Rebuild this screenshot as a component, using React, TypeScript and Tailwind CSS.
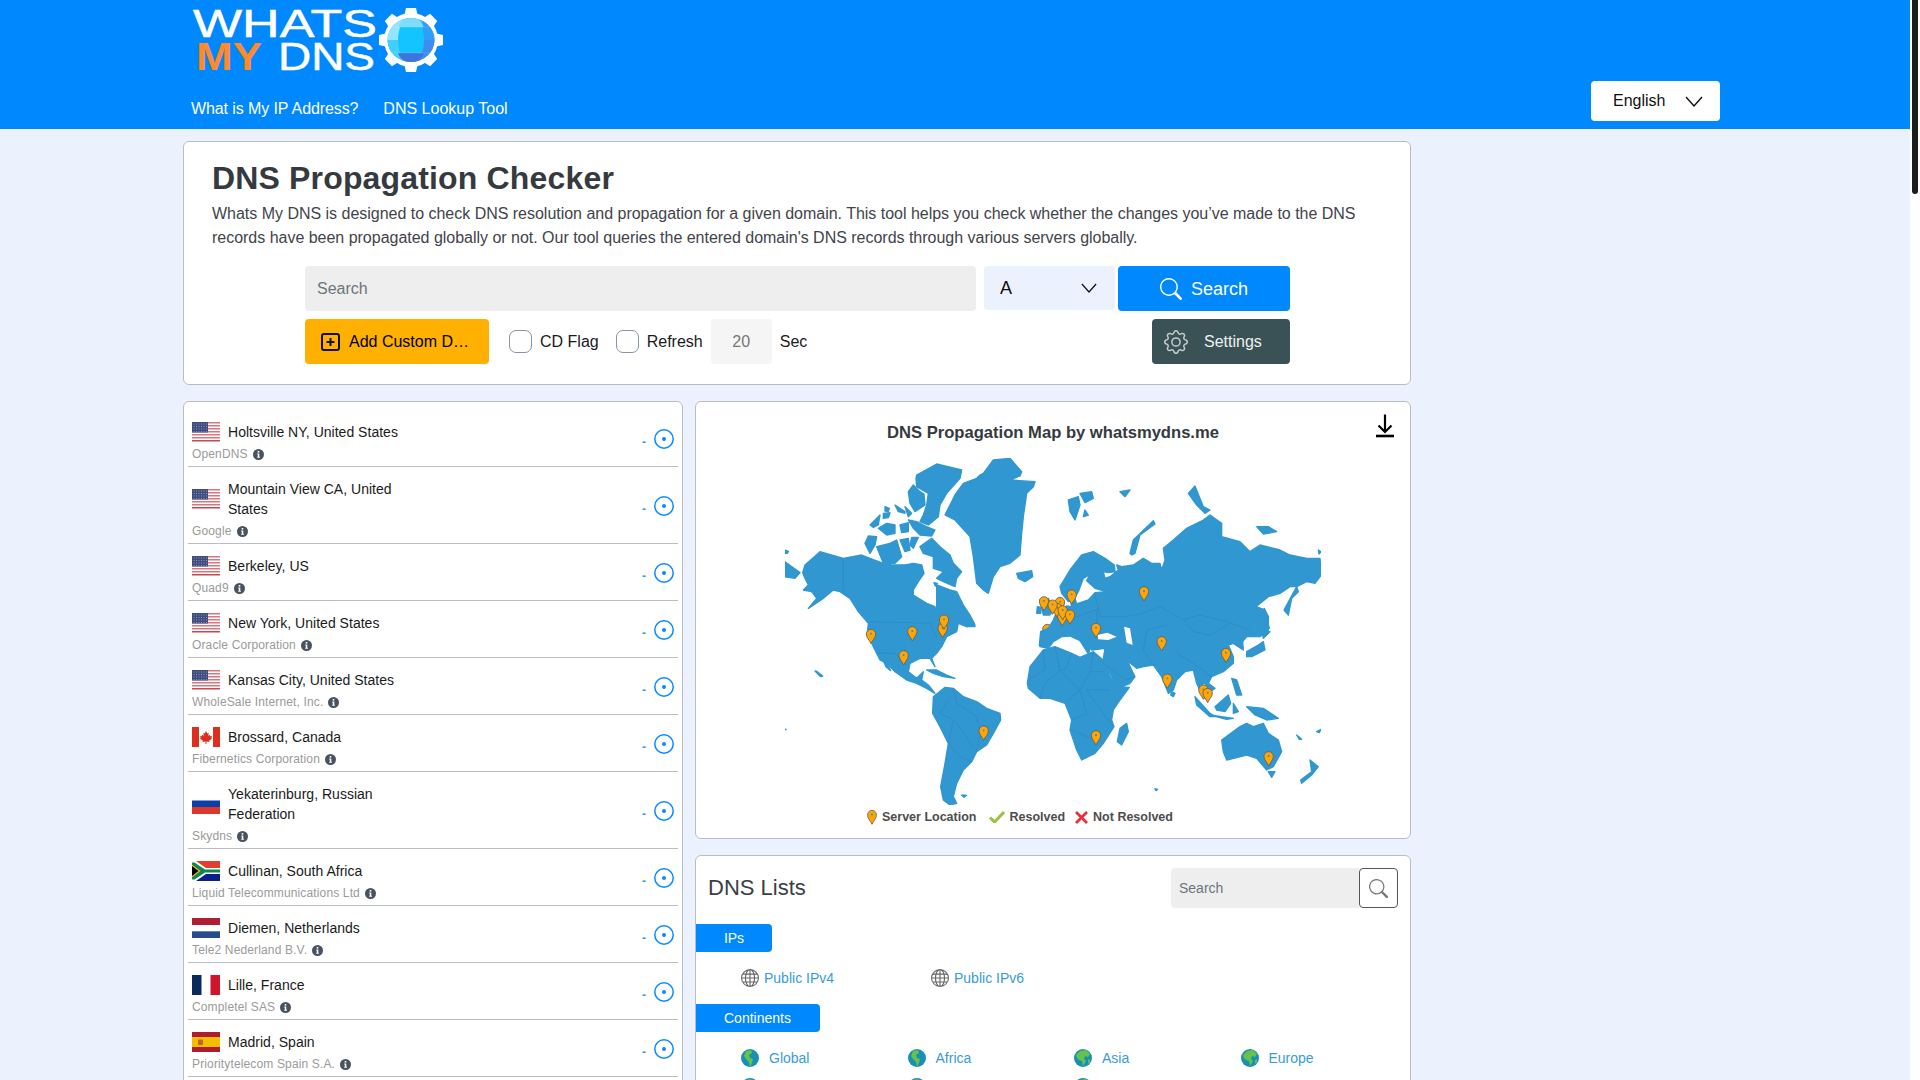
import React from "react";
import { BsGear, BsSearch, BsGlobe } from "react-icons/bs";

const font = "font-['Liberation_Sans',Arial,sans-serif]";

function Chevron({ cls }: { cls: string }) {
  return (
    <svg viewBox="0 0 18 11" className={cls} fill="none" stroke="currentColor" strokeWidth="1.4">
      <path d="M1 1 L9 10 L17 1" />
    </svg>
  );
}

function Logo() {
  return (
    <svg width="262" height="76" viewBox="191 2 262 76" className="block">
      <defs>
        <clipPath id="gl"><ellipse cx="411" cy="40" rx="23.5" ry="22" /></clipPath>
      </defs>
      <text x="193" y="37" fontFamily="Liberation Sans" fontSize="38" fill="#fff" stroke="#fff" strokeWidth="0.5" textLength="184" lengthAdjust="spacingAndGlyphs">WHATS</text>
      <text x="196" y="70" fontFamily="Liberation Sans" fontSize="38" fontWeight="700" fill="#ff8a2d" textLength="66" lengthAdjust="spacingAndGlyphs">MY</text>
      <text x="278" y="70" fontFamily="Liberation Sans" fontSize="38" fill="#fff" stroke="#fff" strokeWidth="0.5" textLength="97" lengthAdjust="spacingAndGlyphs">DNS</text>
      <g fill="#fff">
        <circle cx="411" cy="40" r="27" />
        {[0, 45, 90, 135, 180, 225, 270, 315].map((a) => (
          <path key={a} d="M404 17L406 8H416L418 17Z" transform={`rotate(${a} 411 40)`} />
        ))}
      </g>
      <g clipPath="url(#gl)">
        <rect x="385" y="15" width="52" height="50" fill="#2fa8fb" />
        <rect x="385" y="15" width="26" height="25" fill="#93e6ff" />
        <rect x="385" y="40" width="26" height="25" fill="#3fd0ff" />
        <rect x="411" y="40" width="26" height="25" fill="#3f8cf0" />
        <path d="M423 15h14v25h-14z" fill="#2f9dfa" />
        <ellipse cx="411" cy="40" rx="13" ry="23" fill="#14c4ff" />
        <path d="M411 17c-7 0-11 4-12.500 10h25c-1.500-6-5.500-10-12.500-10z" fill="#7fdcff" />
        <path d="M398 53c2 6 7 10 13 10s11-4 13-10z" fill="#3f74dd" />
        <path d="M387 27h48M387 53h48" stroke="#fff" strokeOpacity="0.25" strokeWidth="0.6" />
      </g>
    </svg>
  );
}

function Flag({ c }: { c: string }) {
  const cls = "w-[28px] h-[20px] shrink-0 block";
  if (c === "us")
    return (
      <svg viewBox="0 0 28 20" className={cls}>
        <rect width="28" height="20" fill="#fff" />
        {[0, 3, 6, 9, 12, 15, 18].map((y) => (
          <rect key={y} y={y} width="28" height="1.5" fill={y === 18 ? "#c8464f" : "#d9757d"} />
        ))}
        <rect width="16" height="10.5" fill="#3f4c7e" />
        {[1.5, 4, 6.5, 9].map((y) =>
          [1.5, 4, 6.5, 9, 11.5, 14].map((x) => (
            <rect key={`${x}-${y}`} x={x} y={y} width="1" height="1" fill="#8a93b8" />
          ))
        )}
      </svg>
    );
  if (c === "ca")
    return (
      <svg viewBox="0 0 28 20" className={cls}>
        <rect width="28" height="20" rx="1" fill="#fff" />
        <rect width="7" height="20" fill="#dc2f1f" />
        <rect x="21" width="7" height="20" fill="#dc2f1f" />
        <path d="M14 4l1.3 2.4 1.4-.6-.5 3 1.7-1 .4 1.4 1.7-.2-.7 2 .8.5-3 2.3.4 1.2-3-.4v2.4h-1V14.6l-3 .4.4-1.2-3-2.3.8-.5-.7-2 1.7.2.4-1.4 1.7 1-.5-3 1.4.6z" fill="#dc2f1f" />
      </svg>
    );
  if (c === "ru")
    return (
      <svg viewBox="0 0 28 20" className={cls}>
        <rect y="6.5" width="28" height="7" fill="#0d3fa8" />
        <rect y="13" width="28" height="7" fill="#e0352b" />
      </svg>
    );
  if (c === "za")
    return (
      <svg viewBox="0 0 28 20" className={cls}>
        <rect width="28" height="10" fill="#e23d2e" />
        <rect y="10" width="28" height="10" fill="#0b1f8a" />
        <path d="M0 0h4l10 7h14v6H14L4 20H0z" fill="#fff" />
        <path d="M0 1.5h2.5L13 8.5h15v3H13L2.5 18.500H0z" fill="#0a8a52" />
        <path d="M0 3.500l8.500 6.500L0 16.500z" fill="#fbb81c" />
        <path d="M0 5l6.500 5L0 15z" fill="#000" />
      </svg>
    );
  if (c === "nl")
    return (
      <svg viewBox="0 0 28 20" className={cls}>
        <rect width="28" height="7" fill="#ad1f33" />
        <rect y="7" width="28" height="6.500" fill="#fff" />
        <rect y="13.300" width="28" height="6.700" fill="#274b8e" />
      </svg>
    );
  if (c === "fr")
    return (
      <svg viewBox="0 0 28 20" className={cls}>
        <rect width="9.500" height="20" fill="#0b2a5c" />
        <rect x="18.500" width="9.500" height="20" fill="#cf142b" />
      </svg>
    );
  return (
    <svg viewBox="0 0 28 20" className={cls}>
      <rect width="28" height="20" fill="#b01c2e" />
      <rect y="5" width="28" height="10" fill="#f1bf00" />
      <rect x="6" y="7.500" width="5" height="5.500" rx="1" fill="#c8602a" />
    </svg>
  );
}

function Info() {
  return (
    <svg viewBox="0 0 11 11" className="w-[11px] h-[11px] shrink-0">
      <circle cx="5.500" cy="5.500" r="5.500" fill="#495260" />
      <rect x="4.700" y="2" width="1.600" height="1.600" fill="#fff" />
      <path d="M4.200 4.500h2.100v3.300h.6v1H4.200v-1h.6V5.500h-.6z" fill="#fff" />
    </svg>
  );
}

function Target() {
  return (
    <svg viewBox="0 0 20 20" className="w-[20px] h-[20px] shrink-0">
      <circle cx="10" cy="10" r="9.200" fill="none" stroke="#0a8aff" strokeWidth="1.500" />
      <circle cx="10" cy="10" r="2" fill="#0a8aff" />
    </svg>
  );
}

const rows = [
  ["us", "Holtsville NY, United States", "OpenDNS"],
  ["us", "Mountain View CA, United States", "Google"],
  ["us", "Berkeley, US", "Quad9"],
  ["us", "New York, United States", "Oracle Corporation"],
  ["us", "Kansas City, United States", "WholeSale Internet, Inc."],
  ["ca", "Brossard, Canada", "Fibernetics Corporation"],
  ["ru", "Yekaterinburg, Russian Federation", "Skydns"],
  ["za", "Cullinan, South Africa", "Liquid Telecommunications Ltd"],
  ["nl", "Diemen, Netherlands", "Tele2 Nederland B.V."],
  ["fr", "Lille, France", "Completel SAS"],
  ["es", "Madrid, Spain", "Prioritytelecom Spain S.A."],
];

const americas = [
  "75,345 120,305 190,325 245,315 270,325 310,340 335,345 375,345 400,340 425,345 432,370 415,395 400,420 400,435 440,460 465,470 470,495 470,440 470,405 510,420 530,425 550,465 570,495 585,525 560,530 535,520 530,545 500,560 485,590 470,610 455,625 465,650 450,625 420,625 390,640 385,665 410,685 430,665 425,690 445,705 465,730 440,715 410,700 380,690 345,665 320,640 300,630 280,590 262,550 265,520 235,485 210,445 180,425 160,420 130,445 85,475 110,445 95,425 70,420 85,405 75,385 68,368",
  "420,290 455,265 480,290 510,315 520,340 545,365 530,385 525,410 490,395 470,385 490,365 460,355 460,320 430,310",
  "255,280 265,258 290,260 285,285 270,310",
  "290,290 330,280 350,270 365,320 345,340 310,340",
  "360,270 385,265 390,300 375,305",
  "395,262 415,262 400,295 390,285",
  "270,225 300,195 295,225 280,232",
  "295,235 320,220 345,225 345,250 320,255",
  "360,225 385,218 385,245 365,248",
  "385,210 410,215 440,230 465,240 455,258 420,255 400,235",
  "345,165 375,185 375,190 355,185",
  "375,170 395,190 385,200",
  "315,170 328,175 325,185 315,183",
  "310,190 330,188 325,203 310,205",
  "410,75 470,42 545,60 540,85 500,130 480,165 475,200 445,225 420,215 430,195 440,165 445,130 410,110 408,85",
  "385,125 400,105 420,125 432,132 435,165 405,185 390,160",
  "610,70 640,30 690,25 725,65 720,78 690,90 765,95 760,110 740,130 730,200 725,250 720,315 690,340 660,350 640,380 625,430 610,420 590,400 580,320 570,260 525,210 495,195 525,135 550,100 590,85 600,75",
  "710,370 755,362 758,380 735,395 715,385",
  "460,740 495,712 520,715 550,740 590,755 620,775 660,790 662,810 640,850 620,885 590,905 575,935 550,960 530,1000 520,1040 530,1060 510,1065 490,1050 482,1010 495,940 505,880 480,830 458,790",
  "440,660 470,660 500,675 525,685 490,680 460,670",
  "305,620 320,640 332,662 318,650",
  "545,1035 560,1036 552,1042",
  "105,663 112,665 128,678 122,680",
  "14,335 60,368 45,385 14,380",
  "15,300 25,304 22,310 15,310",
  "14,837 18,838 15,840",
  "555,510 580,515 585,530 560,530",
  "462,398 472,400 466,408",
];

const eurasia = [
  "58,585 62,545 85,535 100,510 110,485 140,468 155,470 150,440 165,445 170,462 205,450 225,428 258,425 225,415 200,392 210,373 190,385 175,425 160,450 145,455 125,430 120,410 150,360 185,315 220,305 255,325 283,345 285,365 265,368 250,365 255,385 270,380 295,360 290,345 305,350 340,345 370,325 395,340 420,340 425,360 435,330 430,295 460,270 500,235 550,210 570,195 605,220 605,260 660,275 690,305 720,285 780,300 810,315 860,325 900,325 904,375 885,400 860,395 830,410 810,410 780,430 745,440 708,470 735,480 745,500 745,540 720,560 680,560 668,575 670,600 640,580 625,585 640,620 640,640 610,665 575,680 565,700 585,715 570,725 555,700 540,705 550,735 562,748 548,740 530,700 520,660 495,665 470,690 460,720 445,730 425,680 400,645 370,650 350,655 322,632 345,680 330,700 295,715 285,700 255,640 250,625 255,595 215,600 215,585 205,612 180,572 150,558 125,560 100,575 85,595 60,590",
  "22,700 30,650 70,600 105,590 155,610 180,622 220,605 252,632 270,680 290,710 328,712 300,750 280,780 275,810 282,830 250,880 225,910 185,930 170,900 150,840 155,810 135,760 90,745 60,745 25,715",
  "60,450 85,445 100,480 90,495 70,495",
  "52,470 64,472 62,490 50,490",
  "320,820 325,845 305,885 292,875 300,835",
  "455,725 465,730 460,740 452,735",
  "680,605 715,585 730,575 735,600 695,620 680,620",
  "725,540 750,545 730,565",
  "733,475 740,500 748,535 738,530 730,500",
  "792,480 830,410 835,425 815,445 805,495",
  "635,685 650,690 665,735 650,735",
  "585,770 625,735 632,760 615,785 590,780",
  "525,740 570,790 585,800 570,800 530,765",
  "570,795 640,805 620,808",
  "640,760 655,785 640,790",
  "680,770 730,775 775,805 740,810 705,795",
  "605,870 660,830 680,820 700,830 730,820 745,850 775,870 785,905 760,950 740,960 710,925 680,915 620,930 610,905",
  "745,965 765,965 755,982",
  "870,930 895,950 875,975 845,1000 842,990 875,965",
  "145,150 175,140 180,165 165,210 150,185",
  "180,130 215,125 220,145 195,158",
  "195,180 205,195 190,200",
  "300,125 330,120 315,140",
  "330,310 340,270 400,212 405,222 360,255 345,310 335,315",
  "710,230 745,230 770,245 730,252",
  "505,130 525,108 550,170 570,180 555,190 530,165",
  "830,855 845,868 838,868",
  "890,845 903,838 898,848",
  "405,1016 413,1018 408,1022",
  "895,300 903,305 897,312",
];

const holes = [
  "232,555 262,548 290,560 265,570 235,568",
  "312,530 330,535 338,585 320,578",
];

const lines8 = [
  "190,325 190,425 210,445",
  "268,515 450,520 470,560",
  "290,610 345,610 382,648",
  "505,750 480,790 520,810 505,880 540,920 575,935",
  "520,715 530,760 590,800 600,850 590,905",
  "520,810 560,860 575,890",
];
const lines9 = [
  "70,600 75,660 25,690",
  "105,590 120,660 75,700 60,745",
  "155,610 135,660 120,660 180,720 135,760",
  "220,605 210,665 180,720 200,790 155,810",
  "252,665 210,665",
  "270,720 200,720 250,790 282,830",
  "155,840 225,870 250,880",
  "250,640 320,690 345,680",
  "310,500 370,490 420,470 490,510 540,495 620,515 690,540",
  "490,510 520,545 570,555 630,520",
  "440,525 380,540 370,600 400,645",
  "470,610 520,640 575,680",
  "130,500 170,500 230,480 230,540",
  "225,430 240,500 310,500",
];

const pins8 = [[273, 558], [397, 550], [371, 622], [488, 540], [492, 515], [611, 848], [802, 543]];
const pins9 = [[72, 460], [120, 462], [112, 480], [98, 470], [127, 505], [128, 487], [150, 500], [155, 440], [228, 540], [372, 430], [425, 580], [618, 615], [442, 692], [550, 725], [563, 735], [228, 862], [746, 925]];

function Pin({ x, y }: { x: number; y: number }) {
  return (
    <g transform={`translate(${x} ${y})`}>
      <path d="M0 23C-5 11-14 6-14-6A14 14 0 0 1 14-6C14 6 5 11 0 23Z" fill="#ffa506" stroke="#5f5f55" strokeWidth="2.500" />
      <circle cx="0" cy="-7" r="2.800" fill="#4f87a8" />
    </g>
  );
}

function WorldMap() {
  return (
    <svg viewBox="785 458 536 347" className="block w-[536px] h-[347px] mx-auto mt-[16px]">
      <g transform="translate(780 450) scale(0.33333)">
        {americas.map((p, i) => (
          <polygon key={i} points={p} fill="#3097d0" stroke="#3097d0" strokeWidth="4" strokeLinejoin="round" />
        ))}
        {lines8.map((p, i) => (
          <polyline key={i} points={p} fill="none" stroke="#2c88c2" strokeWidth="2" />
        ))}
        {pins8.map(([x, y], i) => <Pin key={i} x={x} y={y} />)}
      </g>
      <g transform="translate(1020 450) scale(0.33333)">
        {eurasia.map((p, i) => (
          <polygon key={i} points={p} fill="#3097d0" stroke="#3097d0" strokeWidth="4" strokeLinejoin="round" />
        ))}
        {holes.map((p, i) => (
          <polygon key={i} points={p} fill="#fff" />
        ))}
        {lines9.map((p, i) => (
          <polyline key={i} points={p} fill="none" stroke="#2c88c2" strokeWidth="2" />
        ))}
        {pins9.map(([x, y], i) => <Pin key={i} x={x} y={y} />)}
      </g>
    </svg>
  );
}

function Earth({ v }: { v: number }) {
  return (
    <svg viewBox="0 0 18 18" className="w-[18px] h-[18px] shrink-0">
      <circle cx="9" cy="9" r="9" fill="#1a8fb5" />
      {v === 0 ? (
        <path d="M5 2l5-1 1 3-3 2 1 3 3 1-1 4-2 4-1-5-3-3-2-3z" fill="#66c24a" />
      ) : (
        <path d="M2 6l4-4 6-1 4 4-2 3-3-1-1 3 2 2-3 5-1-5-3-1-2-2zM14 11l2-1 0 3-2 2z" fill="#66c24a" />
      )}
    </svg>
  );
}

export default function App() {
  return (
    <div className={`flex h-screen overflow-hidden bg-[#ecf2fd] ${font}`}>
      <div className="w-[1910px] shrink-0">
        <header className="h-[129px] bg-[#0088ff] flex justify-between items-end">
          <div className="pl-[191px]">
            <div className="pt-[2px]"><Logo /></div>
            <nav className="mt-[19px] flex gap-[25px] text-[16px] leading-[24px] text-white h-[32px]">
              <span className="tracking-[-0.1px]">What is My IP Address?</span>
              <span>DNS Lookup Tool</span>
            </nav>
          </div>
          <div className="mr-[190px] mb-[8px] w-[129px] h-[40px] bg-white rounded-[4px] flex items-center justify-between pl-[22px] pr-[17px] text-[16px] text-[#111]">
            <span>English</span>
            <Chevron cls="w-[18px] h-[11px]" />
          </div>
        </header>

        <main className="ml-[183px] w-[1228px] pt-[12px]">
          <section className="h-[244px] bg-white border border-[#b9bcc4] rounded-[6px] pt-[17px] px-[28px]">
            <h1 className="text-[32px] leading-[38px] font-bold tracking-[0.16px] text-[#343a40]">DNS Propagation Checker</h1>
            <p className="mt-[5px] text-[16px] leading-[24px] tracking-[-0.017px] text-[#3f444a]">
              Whats My DNS is designed to check DNS resolution and propagation for a given domain. This tool helps you check whether the changes you’ve made to the DNS records have been propagated globally or not. Our tool queries the entered domain's DNS records through various servers globally.
            </p>
            <div className="ml-[93px] w-[985px] mt-[16px]">
              <div className="flex h-[45px]">
                <div className="w-[671px] bg-[#eeeeee] rounded-[4px] flex items-center pl-[12px] text-[16px] text-[#6c757d]">Search</div>
                <div className="ml-[8px] w-[131px] h-[44px] bg-[#ecf2fd] rounded-[4px] flex items-center justify-between pl-[16px] pr-[18px] text-[18px] text-[#111]">
                  <span>A</span>
                  <Chevron cls="w-[16px] h-[10px]" />
                </div>
                <div className="ml-[3px] w-[172px] bg-[#0088ff] rounded-[4px] flex items-center justify-center gap-[9px] pt-[1px] text-[18px] text-white">
                  <BsSearch className="w-[22px] h-[22px]" />
                  <span>Search</span>
                </div>
              </div>
              <div className="flex h-[45px] mt-[8px] items-center text-[16px] text-[#1a1a1a]">
                <div className="w-[184px] h-[45px] bg-[#ffb000] rounded-[4px] flex items-center pl-[16px] text-black">
                  <svg viewBox="0 0 19 18" className="w-[19px] h-[18px]" fill="none" stroke="#111" strokeWidth="2">
                    <rect x="1" y="1" width="17" height="16" rx="2" />
                    <path d="M9.500 5v8M5.500 9h8" />
                  </svg>
                  <span className="ml-[9px]">Add Custom D…</span>
                </div>
                <div className="ml-[20px] w-[23px] h-[23px] rounded-[7px] border-[1.5px] border-[#8a93a3] bg-white" />
                <span className="ml-[8px]">CD Flag</span>
                <div className="ml-[17px] w-[23px] h-[23px] rounded-[7px] border-[1.5px] border-[#8a93a3] bg-white" />
                <span className="ml-[8px]">Refresh</span>
                <div className="ml-[8px] w-[61px] h-[45px] bg-[#f5f5f5] rounded-[4px] flex items-center justify-center text-[#777]">20</div>
                <span className="ml-[8px]">Sec</span>
                <div className="ml-auto w-[138px] h-[45px] bg-[#3a5155] rounded-[4px] flex items-center pl-[12px] text-[#eef1f1]">
                  <BsGear className="w-[24px] h-[24px] text-[#c5cccd]" />
                  <span className="ml-[16px]">Settings</span>
                </div>
              </div>
            </div>
          </section>

          <div className="flex gap-[12px] mt-[16px] items-start">
            <section className="w-[500px] h-[700px] shrink-0 bg-white border border-[#b9bcc4] rounded-[6px] pt-[8px] px-[4px]">
              {rows.map(([c, name, org], i) => (
                <div key={i} className="flex justify-between items-center border-b border-[#b9bcc4] px-[4px] pt-[12px] pb-[3px]">
                  <div>
                    <div className="flex items-center gap-[8px]">
                      <Flag c={c} />
                      <div className="w-[180px] text-[14px] leading-[20px] tracking-[0.02px] text-[#1a1a1a]">{name}</div>
                    </div>
                    <div className="mt-[3px] h-[18px] flex items-center gap-[5px] text-[12px] tracking-[0.14px] text-[#9a9a9a]">
                      <span>{org}</span>
                      <Info />
                    </div>
                  </div>
                  <div className="flex items-center gap-[8px] mt-[-7px]">
                    <span className="text-[12px] font-bold text-[#3a9bd9] mt-[6px]">-</span>
                    <Target />
                  </div>
                </div>
              ))}
            </section>

            <div className="w-[716px] shrink-0">
              <section className="relative h-[438px] bg-white border border-[#b9bcc4] rounded-[6px] pt-[20px]">
                <h2 className="text-center text-[16.6px] leading-[20px] font-bold text-[#343a40] pt-[1px]">DNS Propagation Map by whatsmydns.me</h2>
                <svg viewBox="0 0 20 24" className="absolute top-[11px] right-[15px] w-[20px] h-[25px]" fill="none" stroke="#000" strokeWidth="2.200">
                  <path d="M10 1v17M3.500 12l6.500 6.500 6.500-6.500" />
                  <path d="M1 22.500h18" strokeWidth="2.600" />
                </svg>
                <div className="mt-[-1px]"><WorldMap /></div>
                <div className="mt-[4px] pl-[171px] flex items-center h-[16px] text-[12.5px] font-bold text-[#4d4d4d]">
                  <svg viewBox="-14 -20 28 44" className="w-[10px] h-[15px]">
                    <path d="M0 22C-5 11-13 6-13-6A13 13 0 0 1 13-6C13 6 5 11 0 22Z" fill="#ffa506" stroke="#6a6a5a" strokeWidth="2.500" />
                    <circle cx="0" cy="-7" r="3" fill="#4f87a8" />
                  </svg>
                  <span className="ml-[5px]">Server Location</span>
                  <svg viewBox="0 0 16 12" className="ml-[13px] w-[16px] h-[12px]" fill="none" stroke="#9ac23c" strokeWidth="3">
                    <path d="M1 6.500l4.500 4.500L15 1" />
                  </svg>
                  <span className="ml-[4px]">Resolved</span>
                  <svg viewBox="0 0 13 13" className="ml-[10px] w-[13px] h-[13px]" fill="none" stroke="#e0323c" strokeWidth="2.800">
                    <path d="M1 1l11 11M12 1L1 12" />
                  </svg>
                  <span className="ml-[5px]">Not Resolved</span>
                </div>
              </section>

              <section className="mt-[16px] h-[400px] bg-white border border-[#b9bcc4] rounded-[6px]">
                <div className="flex items-center justify-between pl-[12px] pr-[12px] pt-[12px]">
                  <h2 className="text-[22px] leading-[40px] text-[#3a3f45]">DNS Lists</h2>
                  <div className="flex h-[40px]">
                    <div className="w-[188px] bg-[#eeeeee] rounded-l-[4px] flex items-center pl-[8px] text-[14px] text-[#6c757d]">Search</div>
                    <div className="w-[39px] border border-[#555] rounded-[4px] flex items-center justify-center text-[#777]">
                      <BsSearch className="w-[19px] h-[19px]" />
                    </div>
                  </div>
                </div>
                <div className="mt-[16px] w-[76px] h-[28px] bg-[#0088ff] rounded-r-[4px] flex items-center justify-center text-[14px] text-white">IPs</div>
                <div className="mt-[15px] pl-[45px] flex h-[22px] text-[14px] text-[#3a9bd5]">
                  <div className="w-[190px] flex items-center gap-[5px]"><BsGlobe className="w-[18px] h-[18px] text-[#666]" />Public IPv4</div>
                  <div className="flex items-center gap-[5px]"><BsGlobe className="w-[18px] h-[18px] text-[#666]" />Public IPv6</div>
                </div>
                <div className="mt-[15px] w-[124px] h-[28px] bg-[#0088ff] rounded-r-[4px] flex items-center pl-[28px] text-[14px] text-white">Continents</div>
                <div className="mt-[17px] pl-[45px] grid grid-cols-[166.5px_166.5px_166.5px_166.5px] auto-rows-[29px] text-[14px] text-[#3a9bd5]">
                  {["Global", "Africa", "Asia", "Europe"].map((t, i) => (
                    <div key={t} className="flex items-start gap-[10px]">
                      <Earth v={i >= 2 ? 1 : 0} />
                      <span className="leading-[18px]">{t}</span>
                    </div>
                  ))}
                  {[0, 1, 2].map((i) => (
                    <div key={i} className="flex items-start"><Earth v={i === 2 ? 1 : 0} /></div>
                  ))}
                </div>
              </section>
            </div>
          </div>
        </main>
      </div>
      <div className="w-[10px] bg-white shrink-0 pl-[2px]">
        <div className="w-[6px] h-[194px] bg-[#1c1c1c] rounded-b-[3px]" />
      </div>
    </div>
  );
}
